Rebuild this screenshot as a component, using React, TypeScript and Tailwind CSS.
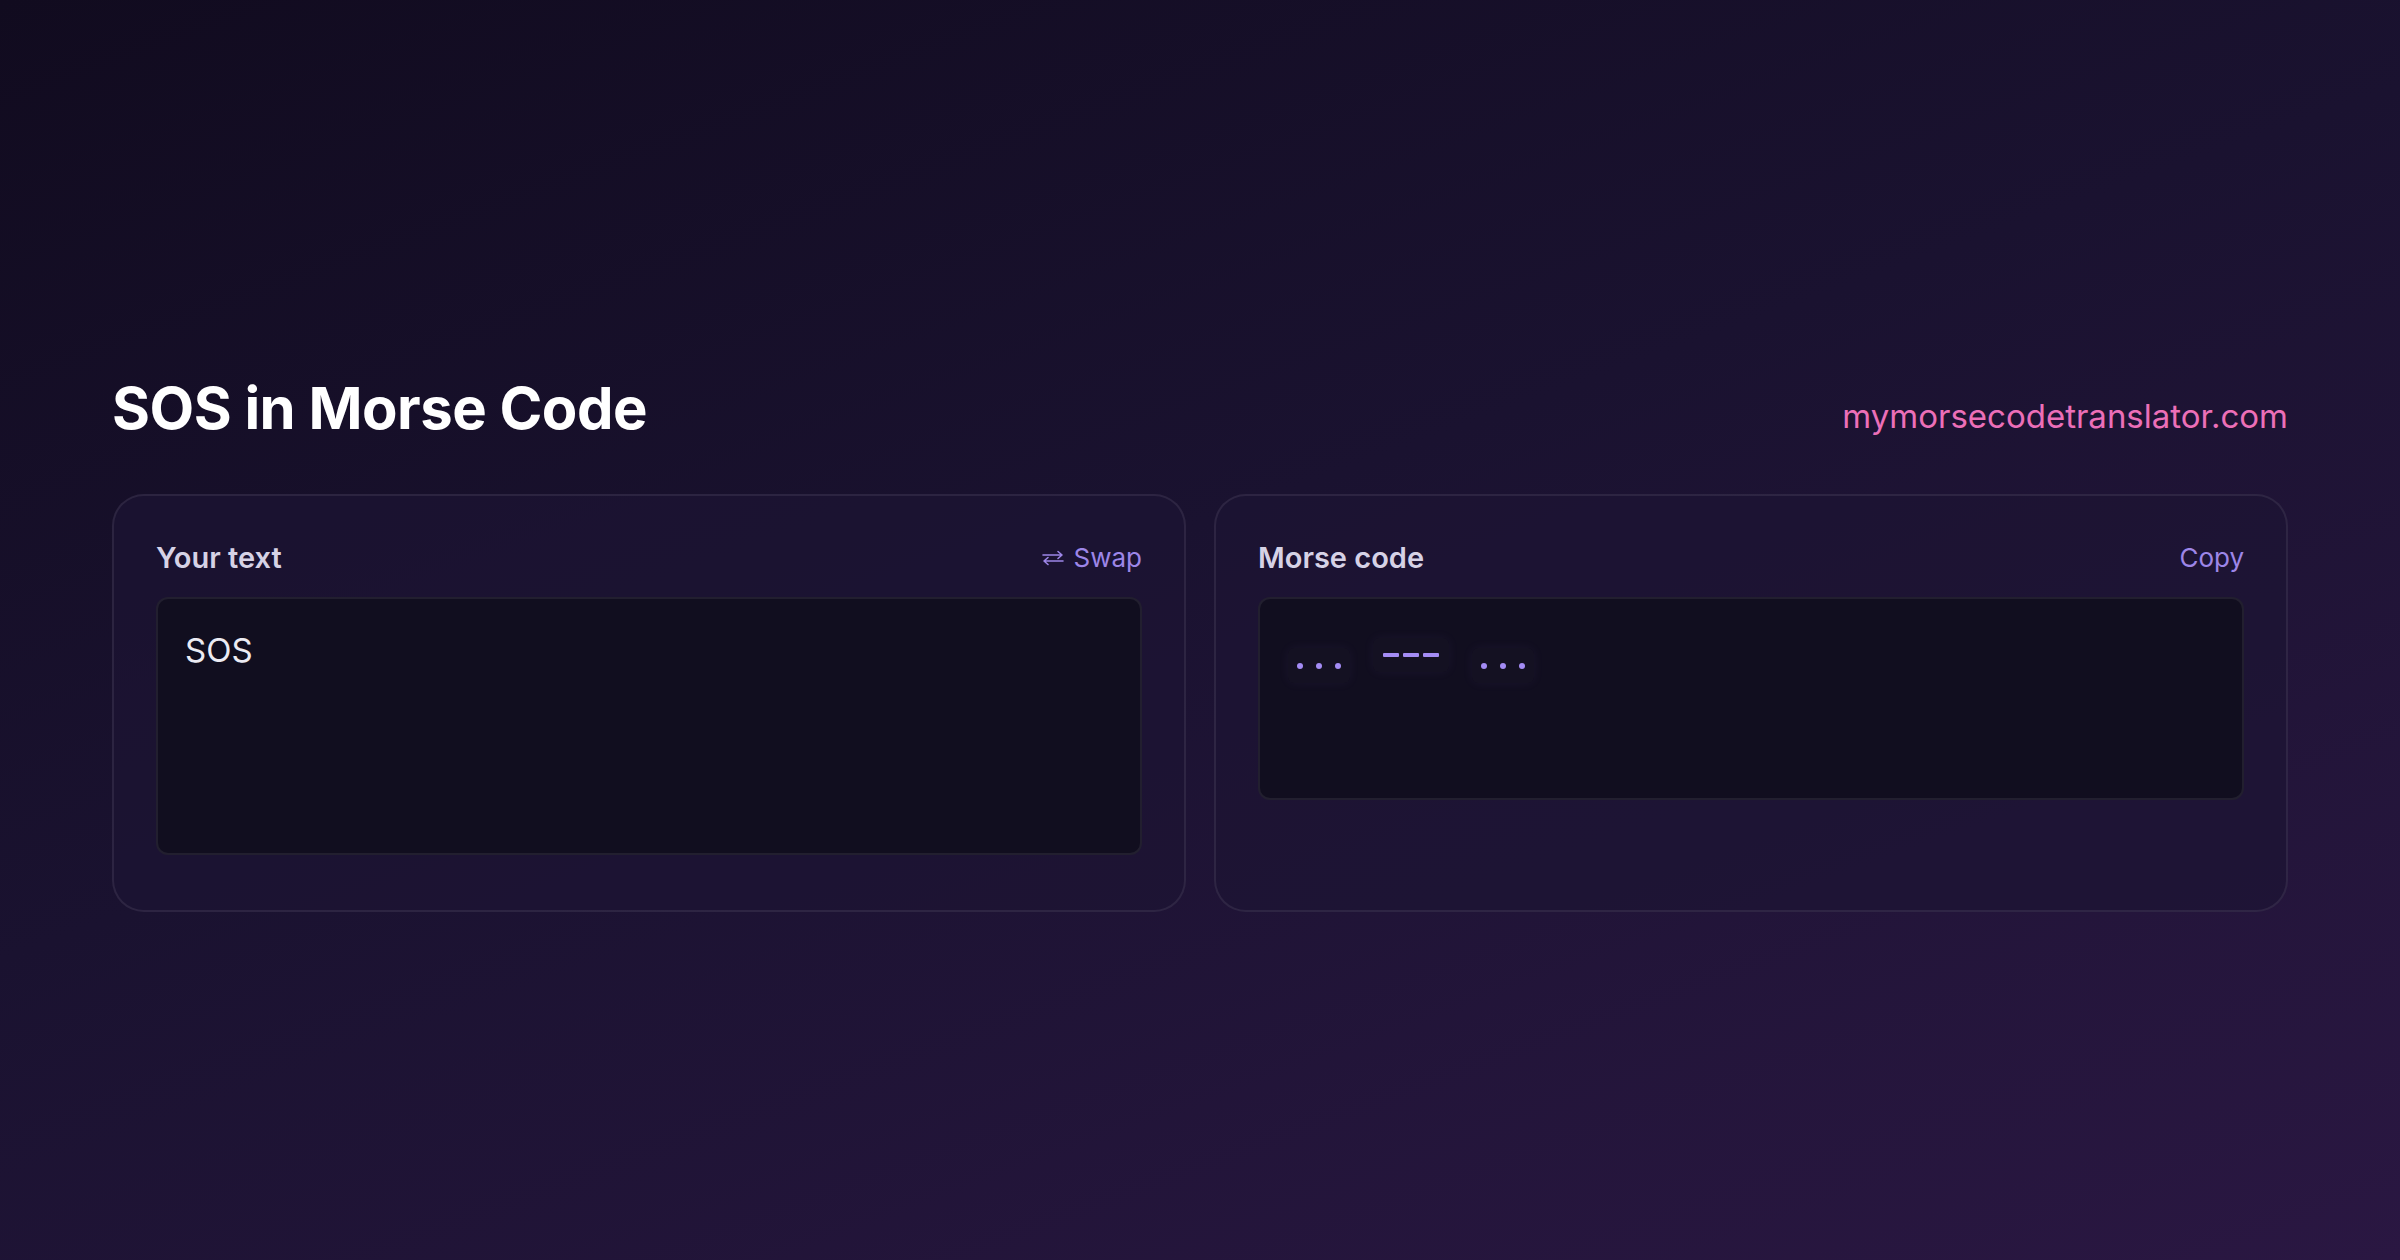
const font = { fontFamily: "Inter, 'Noto Sans', sans-serif" };

function Dots() {
  return (
    <div className="mt-[10px] flex h-[35px] items-center gap-[13px] rounded-md bg-white/[0.015] px-[9px] shadow-[0_0_12px_rgba(167,139,250,0.06)]">
      {[0, 1, 2].map((i) => (
        <span key={i} className="h-[6px] w-[6px] rounded-full bg-[#a48cf5]" />
      ))}
    </div>
  );
}

function Dashes() {
  return (
    <div className="flex h-[34px] items-center gap-[4px] rounded-md bg-white/[0.015] px-[10px] shadow-[0_0_12px_rgba(167,139,250,0.06)]">
      {[0, 1, 2].map((i) => (
        <span key={i} className="h-[4px] w-[16px] rounded-[1px] bg-[#a48cf5]" />
      ))}
    </div>
  );
}

function SwapIcon() {
  return (
    <svg width="24" height="16" viewBox="0 0 24 16" fill="none" stroke="currentColor" strokeWidth="1.6" strokeLinecap="round" strokeLinejoin="round">
      <path d="M2 5h19M17 1.5 21 5l-4 3.5" />
      <path d="M22 11H3M7 7.5 3 11l4 3.5" />
    </svg>
  );
}

function Card({ label, action, children }: { label: string; action: React.ReactNode; children: React.ReactNode }) {
  return (
    <div className="flex h-[418px] flex-col rounded-[32px] border-2 border-white/[0.08] bg-[#1c1433]/70 px-[42px] pt-[41px]">
      <div className="mb-[18px] flex items-center justify-between">
        <span className="text-[29px] font-semibold leading-[42px] text-[#d6d2e6]">{label}</span>
        <span className="flex items-center gap-[9px] text-[26px] leading-[42px] text-[#9d86e8]">{action}</span>
      </div>
      {children}
    </div>
  );
}

export default function App() {
  return (
    <div
      className="flex h-[1260px] w-full flex-col bg-[linear-gradient(160deg,#110b1f_0%,#1a1230_45%,#2a1742_100%)] px-[112px] pt-[370px]"
      style={font}
    >
      <div className="flex items-center justify-between">
        <h1 className="text-[58px] font-bold leading-[76px] tracking-[-0.5px] text-white">SOS in Morse Code</h1>
        <span className="mt-[18px] text-[33px] text-[#ec6fb8]">mymorsecodetranslator.com</span>
      </div>
      <div className="mt-[48px] grid grid-cols-2 gap-[28px]">
        <Card
          label="Your text"
          action={
            <>
              <SwapIcon />
              Swap
            </>
          }
        >
          <div className="h-[258px] rounded-[12px] border-2 border-white/[0.07] bg-[#110e1f] px-[27px] pt-[27px] text-[33px] leading-[48px] text-[#ecebf3]">
            SOS
          </div>
        </Card>
        <Card label="Morse code" action="Copy">
          <div className="flex h-[203px] items-start gap-[23px] rounded-[12px] border-2 border-white/[0.07] bg-[#110e1f] px-[28px] pt-[39px]">
            <Dots />
            <Dashes />
            <Dots />
          </div>
        </Card>
      </div>
    </div>
  );
}
